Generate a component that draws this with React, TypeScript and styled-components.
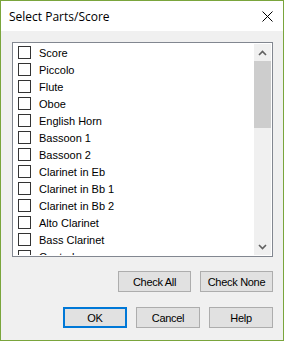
import styled, { createGlobalStyle } from 'styled-components'

const parts = [
  'Score',
  'Piccolo',
  'Flute',
  'Oboe',
  'English Horn',
  'Bassoon 1',
  'Bassoon 2',
  'Clarinet in Eb',
  'Clarinet in Bb 1',
  'Clarinet in Bb 2',
  'Alto Clarinet',
  'Bass Clarinet',
  'Contrabassoon',
]

const GlobalStyle = createGlobalStyle`
  html, body {
    margin: 0;
    padding: 0;
    background: #f0f0f0;
  }
  * {
    box-sizing: border-box;
  }
`

const StyledWindow = styled.div`
  width: 284px;
  height: 341px;
  border: 1px solid #7aa53c;
  display: flex;
  flex-direction: column;
  font-family: 'Liberation Sans', Arial, sans-serif;
  font-size: 11px;
  color: #000;
`

const StyledTitleBar = styled.div`
  height: 30px;
  background: #fff;
  display: flex;
  align-items: center;
  justify-content: space-between;
  padding: 0 10px 0 8px;
  font-family: 'Open Sans', 'Noto Sans', sans-serif;
  font-size: 12px;
  color: #000;
`

const StyledClose = styled.svg`
  width: 11px;
  height: 11px;
  display: block;
`

const StyledBody = styled.div`
  flex: 1;
  background: #f0f0f0;
  padding: 11px 10px 0 11px;
  display: flex;
  flex-direction: column;
`

const StyledListBox = styled.div`
  height: 215px;
  border: 1px solid #828790;
  background: #fff;
  padding: 1px;
  display: flex;
`

const StyledList = styled.div`
  flex: 1;
  overflow: hidden;
  padding: 0 0 0 4px;
`

const StyledRow = styled.label`
  height: 17px;
  display: flex;
  align-items: center;
  gap: 8px;
  white-space: nowrap;
`

const StyledCheck = styled.span`
  width: 13px;
  height: 13px;
  border: 1px solid #333;
  background: #fff;
  flex-shrink: 0;
`

const StyledScrollbar = styled.div`
  width: 17px;
  background: #f0f0f0;
  display: flex;
  flex-direction: column;
`

const StyledArrow = styled.div`
  height: 17px;
  display: flex;
  align-items: center;
  justify-content: center;
`

const StyledTrack = styled.div`
  flex: 1;
`

const StyledThumb = styled.div`
  height: 67px;
  background: #cdcdcd;
`

const StyledButtonRow = styled.div<{ $top: number }>`
  display: flex;
  justify-content: flex-end;
  gap: 9px;
  margin-top: ${(p) => p.$top}px;
`

const StyledButton = styled.button<{ $width: number; $primary?: boolean }>`
  width: ${(p) => p.$width}px;
  height: 21px;
  background: #e1e1e1;
  border: ${(p) => (p.$primary ? '2px solid #0078d7' : '1px solid #adadad')};
  font: inherit;
  letter-spacing: -0.3px;
  color: #000;
  padding: 0;
  white-space: nowrap;
`

const Arrow = ({ up }: { up?: boolean }) => (
  <svg width="9" height="6" viewBox="0 0 9 6">
    <path
      d={up ? 'M1 5 L4.5 1.5 L8 5' : 'M1 1 L4.5 4.5 L8 1'}
      fill="none"
      stroke="#606060"
      strokeWidth="1.6"
    />
  </svg>
)

const App = () => {
  return (
    <>
      <GlobalStyle />
      <StyledWindow>
        <StyledTitleBar>
          <span>Select Parts/Score</span>
          <StyledClose viewBox="0 0 11 11">
            <path d="M0.5 0.5 L10.5 10.5 M10.5 0.5 L0.5 10.5" stroke="#000" strokeWidth="1" />
          </StyledClose>
        </StyledTitleBar>
        <StyledBody>
          <StyledListBox>
            <StyledList>
              {parts.map((p) => (
                <StyledRow key={p}>
                  <StyledCheck />
                  {p}
                </StyledRow>
              ))}
            </StyledList>
            <StyledScrollbar>
              <StyledArrow>
                <Arrow up />
              </StyledArrow>
              <StyledThumb />
              <StyledTrack />
              <StyledArrow>
                <Arrow />
              </StyledArrow>
            </StyledScrollbar>
          </StyledListBox>
          <StyledButtonRow $top={14}>
            <StyledButton $width={73}>Check All</StyledButton>
            <StyledButton $width={73}>Check None</StyledButton>
          </StyledButtonRow>
          <StyledButtonRow $top={15}>
            <StyledButton $width={64} $primary>
              OK
            </StyledButton>
            <StyledButton $width={64}>Cancel</StyledButton>
            <StyledButton $width={64}>Help</StyledButton>
          </StyledButtonRow>
        </StyledBody>
      </StyledWindow>
    </>
  )
}

export default App
